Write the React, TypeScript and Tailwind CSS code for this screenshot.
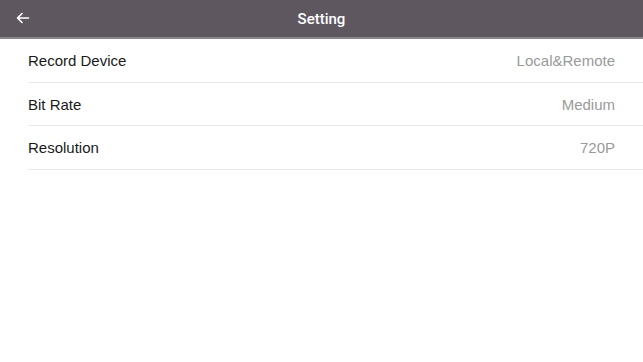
const rows = [
  { label: 'Record Device', value: 'Local&Remote' },
  { label: 'Bit Rate', value: 'Medium' },
  { label: 'Resolution', value: '720P' },
];

export default function App() {
  return (
    <div className="h-[362px] w-[643px] bg-white font-['Liberation_Sans',Arial,sans-serif]">
      <header className="relative flex h-[39px] items-center justify-center border-b-2 border-[#8a8589] bg-[#5f5760]">
        <button className="absolute left-[16px] top-[11px] text-white">
          <svg width="14" height="14" viewBox="0 0 14 14" fill="none" stroke="currentColor" strokeWidth="1.6" strokeLinecap="round" strokeLinejoin="round">
            <path d="M12.5 7H1.5M6 2.5L1.5 7L6 11.5" />
          </svg>
        </button>
        <h1 className="pt-[1px] font-['Roboto',sans-serif] text-[15px] font-medium text-white">Setting</h1>
      </header>
      <ul className="pl-[28px]">
        {rows.map((row) => (
          <li
            key={row.label}
            className="flex h-[43.5px] items-center justify-between border-b border-[#ebebeb] pt-[2px] pr-[28px] text-[15px]"
          >
            <span className="text-[#1a1a1a]">{row.label}</span>
            <span className="text-[#9a9a9a]">{row.value}</span>
          </li>
        ))}
      </ul>
    </div>
  );
}
